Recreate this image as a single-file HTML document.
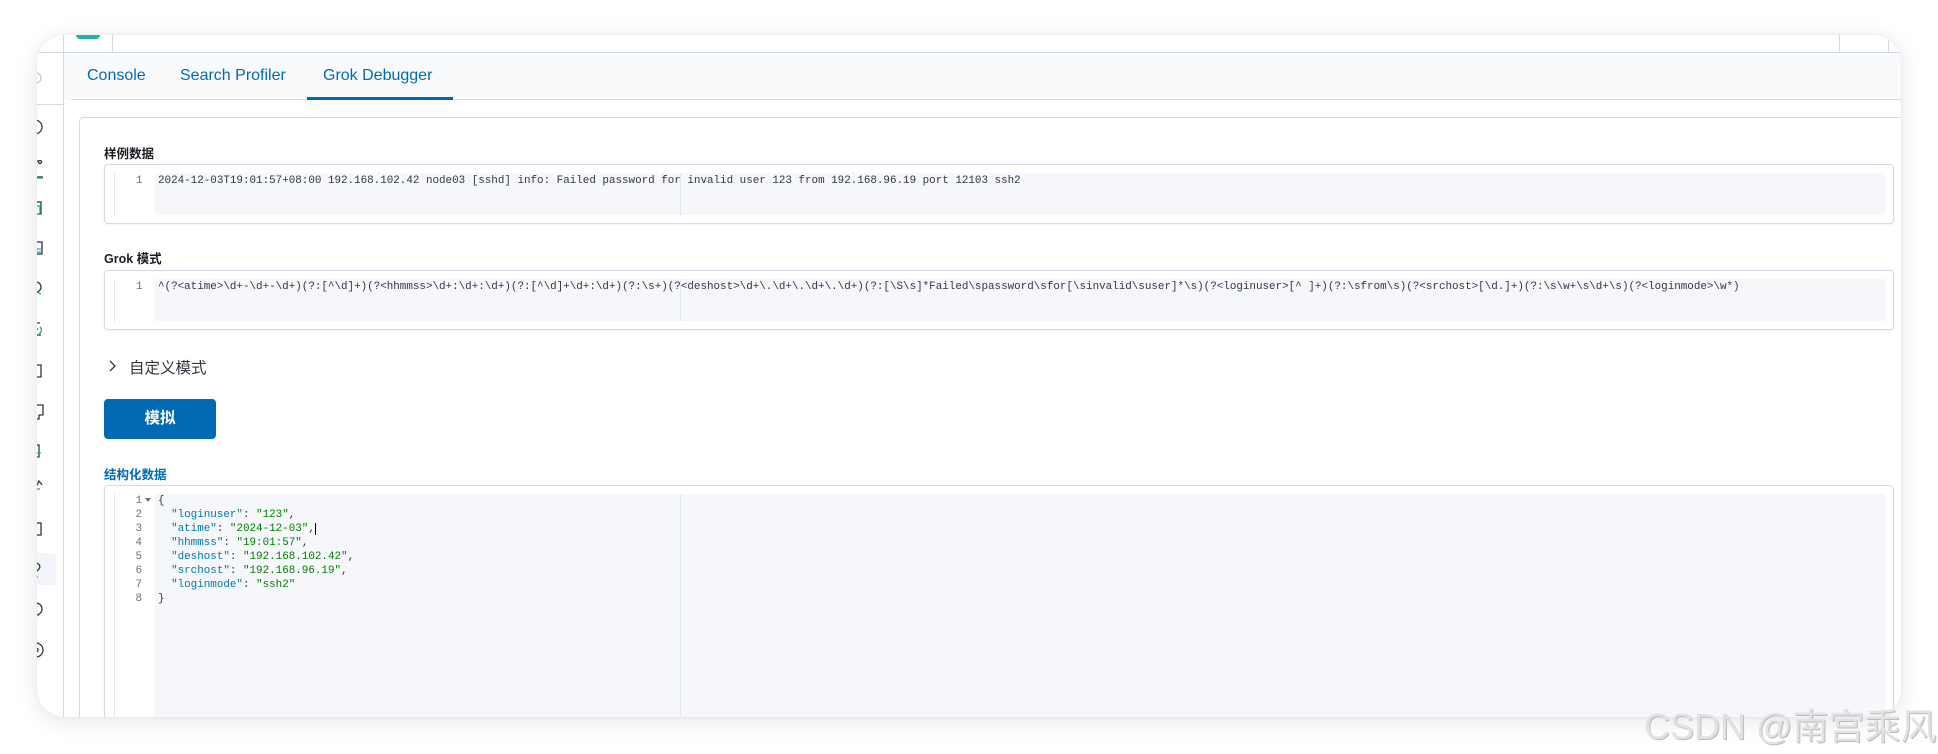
<!DOCTYPE html>
<html><head><meta charset="utf-8"><style>
*{margin:0;padding:0;box-sizing:border-box}
body{width:1938px;height:754px;background:#fff;position:relative;overflow:hidden;font-family:"Liberation Sans","Noto Sans CJK SC",sans-serif}
.card{position:absolute;left:37px;top:35px;width:1864px;height:682px;background:#fff;border-radius:28px;overflow:hidden;box-shadow:0 4px 24px rgba(0,0,0,0.10),0 0 6px rgba(0,0,0,0.04)}
.a{position:absolute}
.mono{font-family:"Liberation Mono",monospace;font-size:10.9px;white-space:pre;color:#343741}
.lbl{font-size:12.5px;font-weight:bold;color:#1a1c21;font-family:"Liberation Sans","Noto Sans CJK SC",sans-serif}
.ed{position:absolute;left:67px;width:1790px;border:1px solid #d3dae6;border-radius:4px;background:#fff;box-shadow:0 1px 2px rgba(0,0,0,.06)}
.gut{position:absolute;left:9px;width:1px;background:#e3e6ec}
.grey{position:absolute;left:50px;right:8px;background:#f5f7fa}
.pm{position:absolute;left:575px;width:1px;background:#e3e6ec}
</style></head><body>
<div class="card">
  <!-- header -->
  <div class="a" style="left:0;top:0;width:1864px;height:18px;background:#fff;border-bottom:1px solid #d3dae6"></div>
  <div class="a" style="left:39px;top:0;width:24px;height:4px;background:#21b3a4;border-radius:0 0 4px 4px"></div>
  <div class="a" style="left:75px;top:0;width:1px;height:18px;background:#d3dae6"></div>
  <div class="a" style="left:1802px;top:0;width:1px;height:18px;background:#d3dae6"></div>
  <div class="a" style="left:1851px;top:0;width:1px;height:18px;background:#d3dae6"></div>
  <!-- sidebar -->
  <div class="a" style="left:26px;top:0;width:1px;height:682px;background:#d3dae6"></div>
  <div class="a" style="left:0;top:69px;width:26px;height:1px;background:#d3dae6"></div>
  <div class="a" style="left:0;top:518px;width:19px;height:32px;background:#f1f4fa;border-radius:0 4px 4px 0"></div>
  <svg class="a" style="left:0;top:30px" width="26" height="630" viewBox="0 0 26 630" fill="none" stroke-width="1.3">
    <circle cx="-1" cy="13" r="5" stroke="#c4c8d0"/>
    <g stroke="#343741">
      <circle cx="-2" cy="62" r="7"/>
      <path d="M-2 102v-6h4M0 112h6" /><circle cx="3" cy="97" r="1.5"/>
      <rect x="-4" y="137" width="8" height="12"/>
      <rect x="-4" y="177" width="9" height="12"/>
      <circle cx="-1" cy="222" r="5"/>
      <path d="M-2 258h5M-2 264h3M0 270h4"/>
      <path d="M-4 300h8v12h-8"/>
      <path d="M-4 340h10v10h-4v4h-6"/>
      <path d="M-4 380h6v12h-6"/>
      <path d="M-4 428l6-12 3 4"/>
      <rect x="-4" y="458" width="8" height="12"/>
      <path d="M-2 498c4 0 6 3 4 6l-3 3v4"/>
      <circle cx="-1" cy="544" r="6"/>
      <circle cx="-1" cy="585" r="7"/><circle cx="-1" cy="585" r="2"/>
    </g>
    <g stroke="#1ba9a0">
      <path d="M-4 65l4-5"/><path d="M-2 113h8"/><rect x="-3" y="141" width="6" height="8"/>
      <path d="M-1 184h5M-1 187h5"/><path d="M-2 226l6 3"/><path d="M3 262c2 2 2 5-1 7"/>
      <path d="M-2 388h6"/><path d="M-2 424h5"/><path d="M-2 512h3"/><path d="M-2 548l4 3"/>
    </g>
  </svg>
  <!-- tabs -->
  <div class="a" style="left:27px;top:18px;width:1837px;height:47px;background:#f9fafc"></div>
  <div class="a" style="left:34px;top:64px;width:1830px;height:1px;background:#d3dae6"></div>
  <div class="a" style="left:50px;top:32px;font-size:16px;color:#006bb4">Console</div>
  <div class="a" style="left:143px;top:32px;font-size:16px;color:#006bb4">Search Profiler</div>
  <div class="a" style="left:286px;top:32px;font-size:16px;color:#006bb4">Grok Debugger</div>
  <div class="a" style="left:270px;top:62px;width:146px;height:3px;background:#006bb4"></div>
  <!-- panel -->
  <div class="a" style="left:42px;top:82px;width:1830px;height:620px;background:#fff;border:1px solid #d3dae6;border-radius:4px"></div>
  <div class="a lbl" style="left:67px;top:108px">样例数据</div>
  <div class="ed" style="top:129px;height:60px">
    <div class="gut" style="top:8px;height:43px"></div>
    <div class="grey" style="top:8px;height:42px"></div>
    <div class="pm" style="top:8px;height:42px"></div>
    <div class="a mono" style="left:31px;top:10px;color:#69707d">1</div>
    <div class="a mono" style="left:53px;top:10px">2024-12-03T19:01:57+08:00 192.168.102.42 node03 [sshd] info: Failed password for invalid user 123 from 192.168.96.19 port 12103 ssh2</div>
  </div>
  <div class="a lbl" style="left:67px;top:213px">Grok 模式</div>
  <div class="ed" style="top:235px;height:60px">
    <div class="gut" style="top:8px;height:43px"></div>
    <div class="grey" style="top:8px;height:42px"></div>
    <div class="pm" style="top:8px;height:42px"></div>
    <div class="a mono" style="left:31px;top:10px;color:#69707d">1</div>
    <div class="a mono" style="left:53px;top:10px">^(?&lt;atime&gt;\d+-\d+-\d+)(?:[^\d]+)(?&lt;hhmmss&gt;\d+:\d+:\d+)(?:[^\d]+\d+:\d+)(?:\s+)(?&lt;deshost&gt;\d+\.\d+\.\d+\.\d+)(?:[\S\s]*Failed\spassword\sfor[\sinvalid\suser]*\s)(?&lt;loginuser&gt;[^ ]+)(?:\sfrom\s)(?&lt;srchost&gt;[\d.]+)(?:\s\w+\s\d+\s)(?&lt;loginmode&gt;\w*)</div>
  </div>
  <svg class="a" style="left:70px;top:324px" width="10" height="14" viewBox="0 0 10 14"><path d="M3 2l5 5-5 5" stroke="#343741" stroke-width="1.3" fill="none"/></svg>
  <div class="a" style="left:92px;top:321px;font-size:15.5px;color:#343741">自定义模式</div>
  <div class="a" style="left:67px;top:364px;width:112px;height:40px;background:#006bb4;border-radius:4px;color:#fff;font-size:15.5px;font-weight:bold;text-align:center;line-height:40px">模拟</div>
  <div class="a lbl" style="left:67px;top:429px;color:#006bb4">结构化数据</div>
  <div class="ed" style="top:450px;height:260px">
    <div class="gut" style="top:8px;height:250px"></div>
    <div class="grey" style="top:8px;height:250px"></div>
    <div class="pm" style="top:8px;height:250px"></div>
    <div class="a mono" style="left:20px;top:8px;line-height:14px;color:#69707d;text-align:right;width:17px">1
2
3
4
5
6
7
8</div>
    <div class="a" style="left:40px;top:12px;width:0;height:0;border-left:3px solid transparent;border-right:3px solid transparent;border-top:4px solid #69707d"></div>
    <div class="a mono" style="left:53px;top:8px;line-height:14px">{
  <span style="color:#0079a5">"loginuser"</span>: <span style="color:#008000">"123"</span>,
  <span style="color:#0079a5">"atime"</span>: <span style="color:#008000">"2024-12-03"</span>,<span style="border-left:1.5px solid #000"></span>
  <span style="color:#0079a5">"hhmmss"</span>: <span style="color:#008000">"19:01:57"</span>,
  <span style="color:#0079a5">"deshost"</span>: <span style="color:#008000">"192.168.102.42"</span>,
  <span style="color:#0079a5">"srchost"</span>: <span style="color:#008000">"192.168.96.19"</span>,
  <span style="color:#0079a5">"loginmode"</span>: <span style="color:#008000">"ssh2"</span>
}</div>
  </div>
</div>
<div class="a" style="left:1644px;top:698px;font-size:36px;color:#e2e2e2;white-space:nowrap;text-shadow:1px 1px 0 #bbb;font-family:'Liberation Sans','Noto Sans CJK SC',sans-serif">CSDN @南宫乘风</div>
</body></html>
